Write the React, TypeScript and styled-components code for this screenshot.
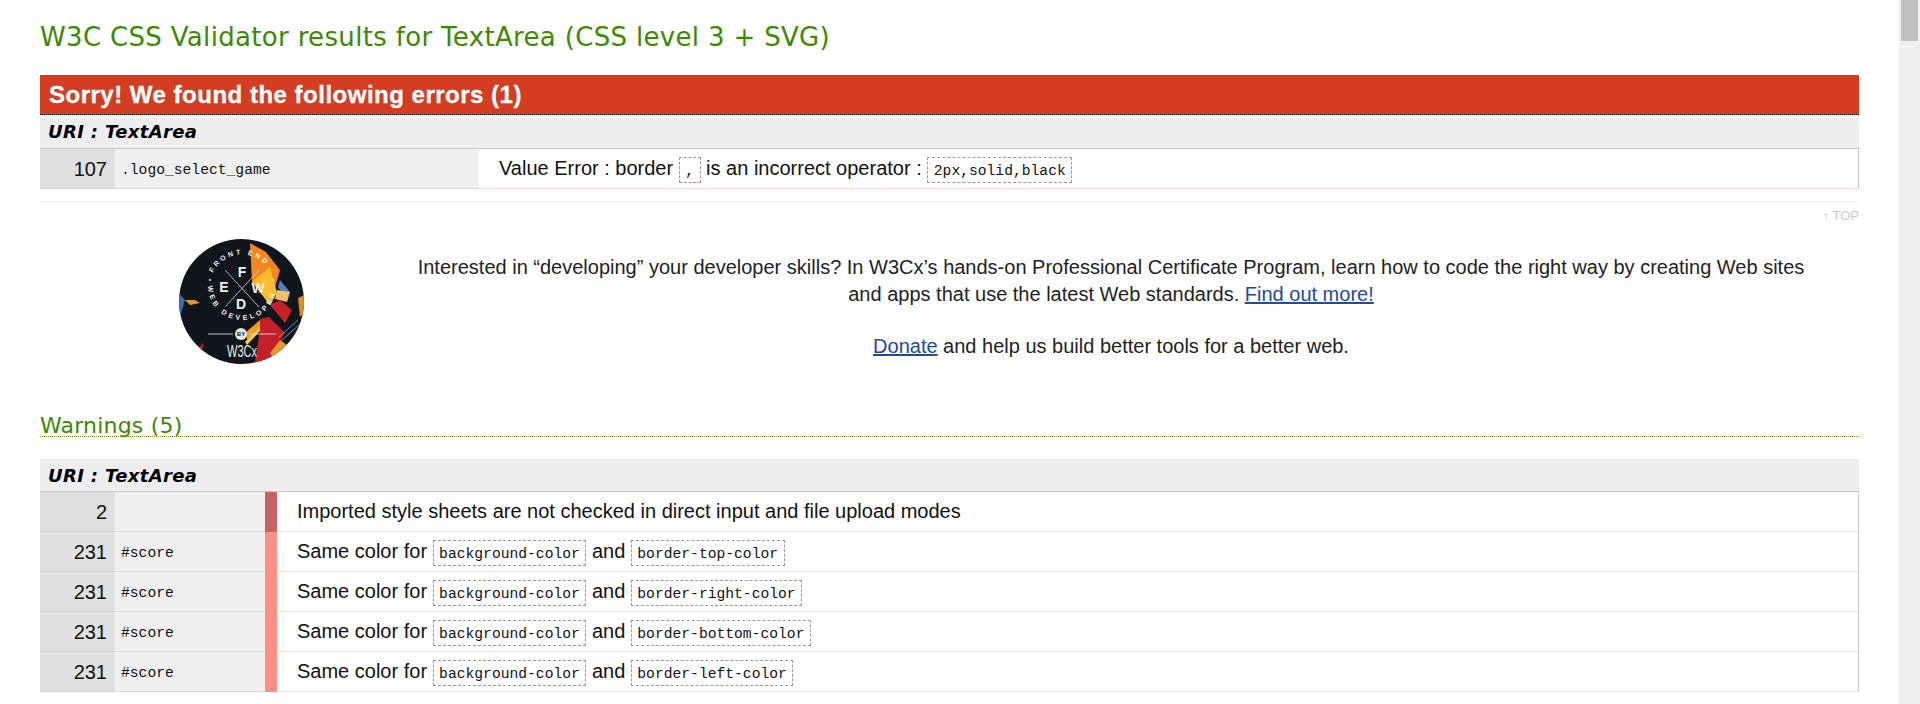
import styled, { createGlobalStyle } from "styled-components";

const GlobalStyle = createGlobalStyle`
  html, body {
    margin: 0;
    padding: 0;
    height: 100%;
    overflow: hidden;
    background: #fff;
  }
  #root {
    height: 704px;
  }
`;

const warnings = [
  { line: "2", prop: "", level: 0, first: "", second: "" },
  { line: "231", prop: "#score", level: 1, first: "background-color", second: "border-top-color" },
  { line: "231", prop: "#score", level: 1, first: "background-color", second: "border-right-color" },
  { line: "231", prop: "#score", level: 1, first: "background-color", second: "border-bottom-color" },
  { line: "231", prop: "#score", level: 1, first: "background-color", second: "border-left-color" },
];

function FewdLogo() {
  return (
    <LogoSvg viewBox="0 0 125 125" aria-label="Front End Web Developer by W3Cx">
      <defs>
        <clipPath id="disc">
          <circle cx="62.5" cy="62.5" r="62.5" />
        </clipPath>
        <path id="arcTop" d="M34 34 A32 32 0 0 1 92 34" fill="none" />
        <path id="arcBottom" d="M29 47 A34 34 0 1 0 97 47" fill="none" />
      </defs>
      <g clipPath="url(#disc)">
        <rect width="125" height="125" fill="#10141b" />
        <polygon points="71,4 87,13 101,31 91,66 73,43" fill="#f5851d" />
        <polygon points="73,43 91,28 98,54 91,66" fill="#fbbd2e" />
        <polygon points="101,41 111,53 106,58 99,48" fill="#5a7fb8" />
        <polygon points="98,51 111,53 108,63 96,60" fill="#edc26c" />
        <polygon points="91,66 101,61 113,71 106,84" fill="#c62028" />
        <polygon points="119,59 125,56 125,74 121,78" fill="#e08a22" />
        <polygon points="81,80 90,78 106,94 98,106 93,123 76,123 81,91" fill="#c4202a" />
        <polygon points="66,94 81,81 81,91 69,103" fill="#f59a22" />
        <polygon points="66,103 81,88 81,92 68,106" fill="#f7cf3a" />
        <polygon points="91,114 101,101 108,106 95,120" fill="#e7962a" />
        <line x1="99" y1="99" x2="119" y2="81" stroke="#6f8fc4" strokeWidth="1" />
        <line x1="102" y1="102" x2="122" y2="84" stroke="#6f8fc4" strokeWidth="1" />
        <polygon points="0,54 6,61 1,78 0,78" fill="#3d6aa6" />
        <polygon points="6,61 16,61 21,64 11,66" fill="#d99a35" />
        <polygon points="18,111 24,104 23,116" fill="#c8202b" />
        <line x1="46" y1="31" x2="80" y2="68" stroke="#dcdcdc" strokeWidth="0.8" />
        <line x1="80" y1="31" x2="46" y2="68" stroke="#dcdcdc" strokeWidth="0.8" />
        <line x1="29" y1="95" x2="54" y2="95" stroke="#dcdcdc" strokeWidth="0.9" />
        <line x1="70" y1="95" x2="97" y2="95" stroke="#dcdcdc" strokeWidth="0.9" />
        <circle cx="31" cy="41" r="1" fill="#f0f0f0" />
        <circle cx="94" cy="41" r="1" fill="#f0f0f0" />
        <circle cx="62" cy="95" r="6" fill="#e8e8e8" />
        <LogoLetter x="63" y="38">F</LogoLetter>
        <LogoLetter x="45" y="53">E</LogoLetter>
        <LogoLetter x="79" y="54">W</LogoLetter>
        <LogoLetter x="62" y="70">D</LogoLetter>
        <LogoBy x="62" y="97">BY</LogoBy>
        <LogoMark x="48" y="118" textLength="30" lengthAdjust="spacingAndGlyphs">
          W3Cx
        </LogoMark>
        <LogoArcText $spacing={2.6}>
          <textPath href="#arcTop">FRONT END</textPath>
        </LogoArcText>
        <LogoArcText $spacing={3.1}>
          <textPath href="#arcBottom">WEB DEVELOPER</textPath>
        </LogoArcText>
      </g>
    </LogoSvg>
  );
}

export default function App() {
  return (
    <Page>
      <GlobalStyle />
      <Content>
        <Title>W3C CSS Validator results for TextArea (CSS level 3 + SVG)</Title>

        <ErrorHeading>Sorry! We found the following errors (1)</ErrorHeading>
        <UriBar $height={34}>URI : TextArea</UriBar>
        <ErrorRow>
          <LineCell>107</LineCell>
          <ContextCell>.logo_select_game</ContextCell>
          <ErrorMessage>
            Value Error : border <Code>,</Code> is an incorrect operator : <Code>2px,solid,black</Code>
          </ErrorMessage>
        </ErrorRow>

        <TopLink>↑ TOP</TopLink>

        <Promo>
          <PromoLogo>
            <FewdLogo />
          </PromoLogo>
          <PromoText>
            <p>
              Interested in “developing” your developer skills? In W3Cx’s hands-on Professional Certificate Program,
              learn how to code the right way by creating Web sites
              <br />
              and apps that use the latest Web standards. <PromoLink href="#">Find out more!</PromoLink>
            </p>
            <p>
              <PromoLink href="#">Donate</PromoLink> and help us build better tools for a better web.
            </p>
          </PromoText>
        </Promo>

        <WarningsTitle>
          <span>Warnings (5)</span>
        </WarningsTitle>

        <UriBar $height={33}>URI : TextArea</UriBar>
        <WarningTable>
          {warnings.map((w, i) => (
            <WarningRow key={i}>
              <LineCell>{w.line}</LineCell>
              <ContextCell>{w.prop}</ContextCell>
              <LevelMark $level={w.level} />
              <WarningMessage>
                {w.first ? (
                  <>
                    Same color for <Code>{w.first}</Code> and <Code>{w.second}</Code>
                  </>
                ) : (
                  "Imported style sheets are not checked in direct input and file upload modes"
                )}
              </WarningMessage>
            </WarningRow>
          ))}
        </WarningTable>
      </Content>
      <Scrollbar>
        <ScrollThumb />
      </Scrollbar>
    </Page>
  );
}

const Page = styled.div`
  display: grid;
  grid-template-columns: 1fr 21px;
  height: 704px;
  overflow: hidden;
  font-family: "Liberation Sans", Arial, sans-serif;
  color: #111;
`;

const Content = styled.main`
  padding: 0 40px;
  overflow: hidden;
`;

const Title = styled.h1`
  margin: 0;
  padding-top: 21px;
  height: 75px;
  box-sizing: border-box;
  font-family: "DejaVu Sans", Verdana, sans-serif;
  font-size: 26px;
  letter-spacing: 0.33px;
  line-height: 33px;
  font-weight: 400;
  color: #3b8a00;
`;

const ErrorHeading = styled.h2`
  margin: 0;
  height: 40px;
  padding: 0 9px;
  box-sizing: border-box;
  background: #d43d21;
  border-bottom: 1px dotted #000;
  font-size: 24px;
  letter-spacing: 0.5px;
  -webkit-text-stroke: 0.3px #fff;
  line-height: 40px;
  font-weight: 700;
  color: #fff;
`;

const UriBar = styled.h3<{ $height: number }>`
  margin: 0;
  height: ${(p) => p.$height}px;
  padding: 0 8px;
  box-sizing: border-box;
  background: #eee;
  border-bottom: 1px solid #c8c8c8;
  font-family: "DejaVu Sans", Verdana, sans-serif;
  font-size: 18px;
  letter-spacing: 0.35px;
  line-height: 33px;
  font-style: italic;
  font-weight: 700;
  color: #000;
`;

const ErrorRow = styled.div`
  display: grid;
  grid-template-columns: 75px 364px 1fr;
  grid-template-rows: 40px;
  border-right: 1px solid #c8c8c8;
`;

const LineCell = styled.div`
  box-sizing: border-box;
  background: #e0e0e0;
  border-bottom: 1px solid #d4d4d4;
  padding-right: 8px;
  text-align: right;
  font-size: 20px;
  line-height: 40px;
`;

const ContextCell = styled.div`
  box-sizing: border-box;
  background: #f0f0f0;
  border-bottom: 1px solid #d8d8d8;
  padding-left: 6px;
  font-family: "Liberation Mono", Consolas, monospace;
  font-size: 14.67px;
  line-height: 42px;
`;

const ErrorMessage = styled.div`
  box-sizing: border-box;
  border-bottom: 1px solid #fdd;
  padding-left: 20px;
  font-size: 20px;
  line-height: 39px;
  white-space: nowrap;
`;

const Code = styled.code`
  display: inline-block;
  box-sizing: border-box;
  height: 26px;
  padding: 2px 5.5px 0;
  border: 1px dashed #999;
  font-family: "Liberation Mono", Consolas, monospace;
  font-size: 14.67px;
  line-height: 22px;
`;

const TopLink = styled.div`
  margin-top: 12px;
  padding-top: 5px;
  height: 19px;
  border-top: 1px solid #eef;
  text-align: right;
  font-size: 13px;
  line-height: 18px;
  color: #c3c8df;
`;

const Promo = styled.section`
  display: grid;
  grid-template-columns: 323px 1fr;
  height: 165px;
  padding-top: 13px;
  box-sizing: border-box;
`;

const PromoLogo = styled.div`
  display: flex;
  justify-content: center;
  padding-left: 80px;
`;

const LogoSvg = styled.svg`
  width: 125px;
  height: 125px;
`;

const LogoLetter = styled.text`
  font-family: "Liberation Sans", sans-serif;
  font-size: 14px;
  font-weight: 700;
  text-anchor: middle;
  fill: #f0f0f0;
`;

const LogoBy = styled.text`
  font-family: "Liberation Sans", sans-serif;
  font-size: 6px;
  font-weight: 700;
  text-anchor: middle;
  fill: #10141b;
`;

const LogoMark = styled.text`
  font-family: "Liberation Sans", sans-serif;
  font-size: 16px;
  fill: #f0f0f0;
`;

const LogoArcText = styled.text<{ $spacing: number }>`
  font-family: "Liberation Sans", sans-serif;
  font-size: 7px;
  font-weight: 700;
  letter-spacing: ${(p) => p.$spacing}px;
  fill: #f0f0f0;
`;

const PromoText = styled.div`
  text-align: center;
  font-size: 20px;
  line-height: 27px;
  color: #222;
  padding-top: 15px;

  p {
    margin: 0 0 25px;
  }
`;

const PromoLink = styled.a`
  color: #234a96;
`;

const WarningsTitle = styled.h2`
  margin: 0 0 22px;
  padding-top: 25px;
  border-bottom: 1px dotted #8f8f2a;
  font-family: "DejaVu Sans", Verdana, sans-serif;
  font-size: 22px;
  letter-spacing: 0.2px;
  line-height: 20px;
  font-weight: 400;
  color: #3b8a00;
`;

const WarningTable = styled.div`
  border-right: 1px solid #c8c8c8;
`;

const WarningRow = styled.div`
  display: grid;
  grid-template-columns: 75px 150px 12px 1fr;
  grid-template-rows: 40px;
`;

const LevelMark = styled.div<{ $level: number }>`
  background: ${(p) => (p.$level === 0 ? "#c86265" : "#fb8f85")};
`;

const WarningMessage = styled.div`
  box-sizing: border-box;
  border-bottom: 1px solid #f6dede;
  padding-left: 20px;
  font-size: 20px;
  line-height: 39px;
  white-space: nowrap;
`;

const Scrollbar = styled.div`
  background: #f0f0f0;
  padding: 0 2px;
`;

const ScrollThumb = styled.div`
  height: 41px;
  background: #c0c0c0;
`;
